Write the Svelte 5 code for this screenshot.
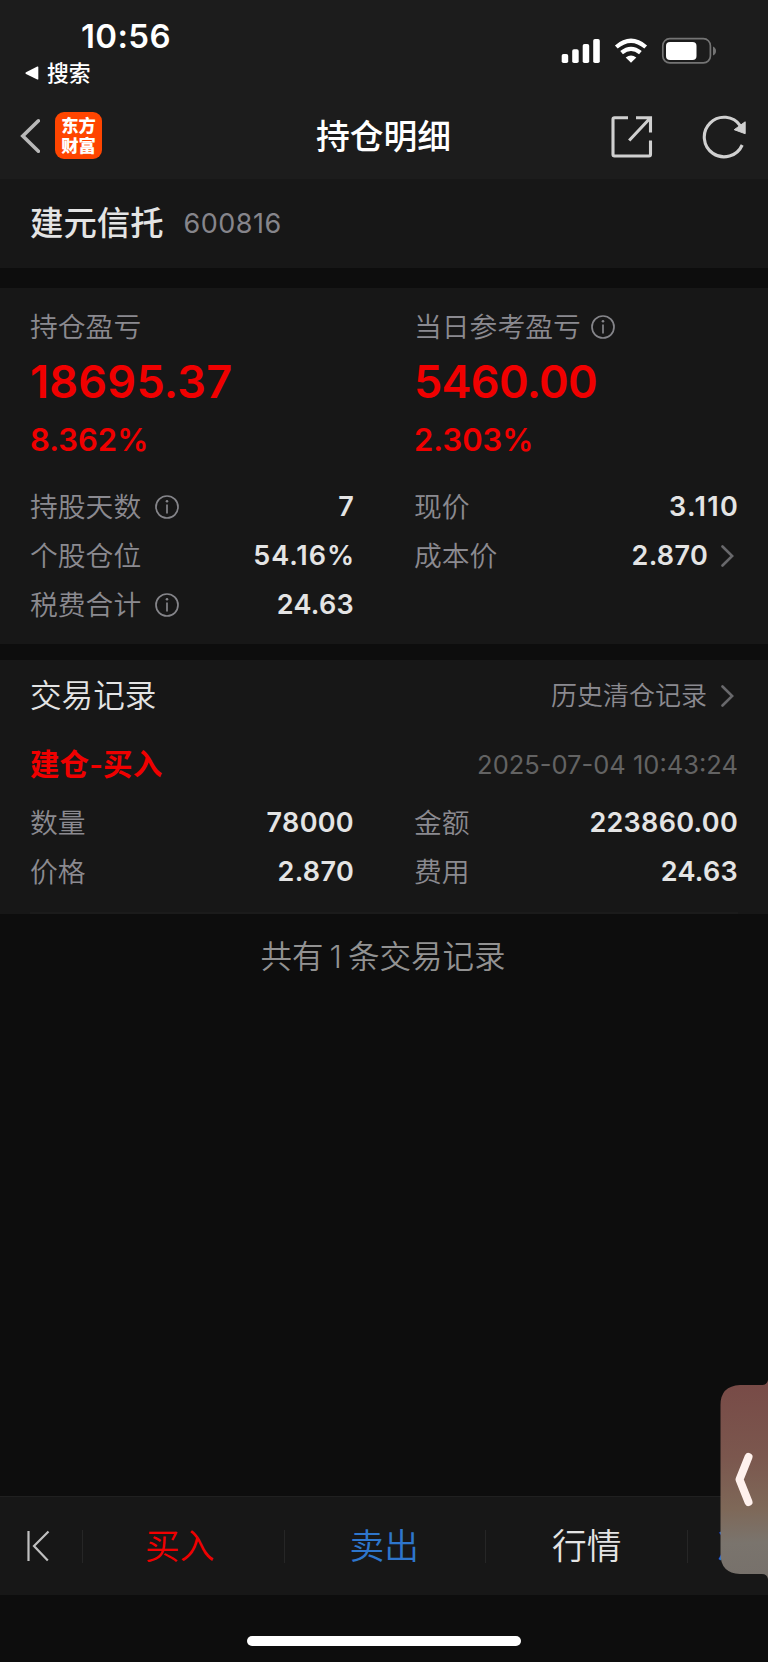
<script>
  const position = [
    { label: '持股天数', info: true, value: '7' },
    { label: '现价', value: '3.110', fit: 'loose' },
    { label: '个股仓位', value: '54.16%', fit: 'open' },
    { label: '成本价', value: '2.870', more: true },
    { label: '税费合计', info: true, value: '24.63' }
  ];
  const trade = [
    { label: '数量', value: '78000' },
    { label: '金额', value: '223860.00' },
    { label: '价格', value: '2.870' },
    { label: '费用', value: '24.63' }
  ];
</script>

{#snippet infoIcon()}
  <svg class="info" viewBox="0 0 24 24" width="24" height="24">
    <circle cx="12" cy="12" r="11" />
    <path d="M12 9.6V18.6" />
    <circle class="dot" cx="12" cy="6.3" r="1.3" />
  </svg>
{/snippet}

{#snippet chevron()}
  <svg class="chev" viewBox="0 0 13 22" width="13" height="22"><path d="M1.5 1.5L11.2 11L1.5 20.5" /></svg>
{/snippet}

{#snippet cell(item)}
  <div class="cell">
    <span class="label">{item.label}</span>
    {#if item.info}{@render infoIcon()}{/if}
    <span class={['value', item.fit]}>{item.value}</span>
    {#if item.more}{@render chevron()}{/if}
  </div>
{/snippet}

<div class="screen">
  <header>
    <div class="status">
      <div class="left">
        <div class="time">10:56</div>
        <div class="return">
          <svg viewBox="0 0 14 14" width="14" height="14"><path d="M13.3 1V13Q13.3 13.8 12.3 13.4L1 8Q-.2 7 1 6.2L12.3.6Q13.3.2 13.3 1Z" fill="#fff" /></svg>
          <span>搜索</span>
        </div>
      </div>
      <svg class="indicators" viewBox="0 0 156 28" width="156" height="28">
        <g fill="#fff">
          <rect x="1.7" y="17" width="6.5" height="9" rx="1.8" />
          <rect x="12.2" y="12.2" width="6.5" height="13.8" rx="1.8" />
          <rect x="22.7" y="7" width="6.5" height="19" rx="1.8" />
          <rect x="33.2" y="2" width="6.6" height="24" rx="1.8" />
          <path d="M71 25.8L65.7 20.6Q71 16.4 76.3 20.6Z" />
        </g>
        <g fill="none" stroke="#fff" stroke-width="4.2">
          <path d="M56.3 10Q71 -2.4 85.7 10" />
          <path d="M61.6 15.7Q71 7.9 80.4 15.7" />
        </g>
        <rect x="102.8" y="1.7" width="47.6" height="24.2" rx="7" fill="none" stroke="#747474" stroke-width="1.7" />
        <rect x="106" y="5" width="30.5" height="18" rx="4" fill="#fff" />
        <path d="M153 9.5Q156 11 156 14T153 18.5Z" fill="#747474" />
      </svg>
    </div>
    <nav>
      <svg class="back" viewBox="0 0 20 36" width="20" height="36"><path d="M18.4 2.8L2.8 18L18.4 33.2" /></svg>
      <div class="logo"><span>东方</span><span>财富</span></div>
      <h1>持仓明细</h1>
      <svg class="tool" viewBox="0 0 44 44" width="44" height="44">
        <path d="M19 2.8H5.5Q4 2.8 4 4.3V39.5Q4 41 5.5 41H40Q41.5 41 41.5 39.5V25.5" />
        <path d="M27 2.8H41.5V17.5M41.5 2.8L20.2 25.5" />
      </svg>
      <svg class="tool refresh" viewBox="0 0 46 44" width="46" height="44">
        <path d="M41.2 30A19.8 19.8 0 1 1 39.4 10.8" />
        <path class="tip" d="M33.2 14.7L44.2 6.8V18.7Z" />
      </svg>
    </nav>
  </header>

  <section class="stock">
    <strong>建元信托</strong>
    <span>600816</span>
  </section>

  <section class="holding">
    <div class="summary">
      <div>
        <div class="caption"><span>持仓盈亏</span></div>
        <div class="amount total">18695.37</div>
        <div class="percent">8.362%</div>
      </div>
      <div>
        <div class="caption"><span>当日参考盈亏</span> {@render infoIcon()}</div>
        <div class="amount today">5460.00</div>
        <div class="percent">2.303%</div>
      </div>
    </div>
    <div class="grid">
      {#each position as item}{@render cell(item)}{/each}
    </div>
  </section>

  <section class="trades">
    <div class="head">
      <h2>交易记录</h2>
      <div class="history"><span>历史清仓记录</span>{@render chevron()}</div>
    </div>
    <div class="deal">
      <b>建仓-买入</b>
      <time>2025-07-04 10:43:24</time>
    </div>
    <div class="grid">
      {#each trade as item}{@render cell(item)}{/each}
    </div>
    <div class="rule"></div>
  </section>

  <main>共有<i>1</i>条交易记录</main>

  <footer>
    <div class="first">
      <svg viewBox="0 0 24 32" width="24" height="32"><path d="M2.5 1V31M22.5 1.5L8 16L21.8 30.5" /></svg>
    </div>
    <div class="tab buy">买入</div>
    <div class="tab sell">卖出</div>
    <div class="tab quote">行情</div>
    <div class="rest">决</div>
  </footer>
  <div class="home"><span></span></div>

  <svg class="drawer" viewBox="0 0 48 200" width="48" height="200">
    <defs>
      <linearGradient id="drawer-fill" gradientUnits="userSpaceOnUse" x1="22" y1="5" x2="28" y2="195">
        <stop offset="0" stop-color="#784b47" />
        <stop offset="0.38" stop-color="#7b574e" />
        <stop offset="0.65" stop-color="#7e6858" />
        <stop offset="0.83" stop-color="#7a746d" />
        <stop offset="1" stop-color="#77716b" />
      </linearGradient>
    </defs>
    <path d="M48 0Q47 5 42 5H20Q.5 6 .5 25V174Q.5 193 20 194H42Q47 194 48 199Z" fill="url(#drawer-fill)" />
    <path d="M28.5 77L19.5 99.5L28.5 122" fill="none" stroke="#fff1ed" stroke-width="8" stroke-linecap="round" stroke-linejoin="round" />
  </svg>
</div>

<style>
  :global(body) { background: #fff; }
  .screen {
    position: relative;
    display: flex;
    flex-direction: column;
    width: 768px;
    height: 1662px;
    overflow: hidden;
    background: #0d0d0d;
    color: #e4e4e4;
    font-family: Inter, "Noto Sans CJK SC", sans-serif;
    white-space: nowrap;
  }
  header { height: 179px; background: #1c1c1c; flex: none; }
  .status { display: flex; justify-content: space-between; height: 93px; padding: 16px 52px 0 25px; color: #fff; box-sizing: border-box; }
  .time { padding-left: 56px; font-size: 33px; line-height: 40px; font-weight: 600; letter-spacing: .35px; }
  .return { display: flex; align-items: center; gap: 8px; height: 34px; font-size: 21.8px; font-weight: 450; }
  .return span { padding-bottom: 3px; }
  .indicators { margin-top: 21px; }
  nav { display: flex; align-items: center; height: 86px; padding: 0 21px 0 20px; }
  .back { fill: none; stroke: #b8b8b8; stroke-width: 3.6; stroke-linecap: round; }
  .logo { display: flex; flex-direction: column; justify-content: center; width: 47px; height: 47px; margin: 0 0 1px 15px; box-sizing: border-box; border-radius: 9px; background: #ff4500; color: #fff; font-size: 17.3px; line-height: 19.5px; font-weight: 800; text-align: center; }
  h1 { flex: 1; margin: 0; padding: 1px 0 0 56px; text-align: center; font-size: 33.8px; line-height: 50px; font-weight: 500; color: #fff; }
  .tool { margin-top: 2px; fill: none; stroke: #d0d0d0; stroke-width: 3.1; }
  .refresh { margin-left: 48px; }
  .tip { fill: #d0d0d0; stroke: #d0d0d0; stroke-width: 1; }
  section { background: #171717; flex: none; box-sizing: border-box; padding: 0 30px; }
  .stock { display: flex; align-items: center; height: 89px; }
  .stock strong { padding-bottom: 7px; font-size: 33.4px; font-weight: 500; }
  .stock span { margin-left: 20px; font-size: 27px; letter-spacing: .5px; color: #86858b; }
  .holding { height: 356px; margin-top: 20px; padding-top: 20px; }
  .summary { display: grid; grid-template-columns: 384px 1fr; height: 174px; }
  .caption { display: flex; align-items: center; gap: 10px; height: 38px; margin-bottom: 2px; font-size: 27.8px; font-weight: 350; color: #8b8a90; }
  .caption span, .label, .history span { padding-bottom: 4px; }
  .amount { height: 68px; line-height: 68px; font-size: 45px; font-weight: 600; color: #f00000; }
  .total { letter-spacing: .25px; }
  .today { letter-spacing: -.7px; }
  .percent { height: 48px; line-height: 48px; font-size: 31px; font-weight: 600; color: #f00000; }
  .grid { display: grid; grid-template-columns: 324px 324px; column-gap: 60px; grid-auto-rows: 49px; }
  .cell { display: flex; align-items: center; }
  .label { font-size: 27.8px; font-weight: 350; color: #8b8a90; }
  .info { fill: none; stroke: #85858a; stroke-width: 1.7; flex: none; }
  .label + .info { margin-left: 14px; }
  .dot { fill: #85858a; stroke: none; }
  .value { margin-left: auto; font-size: 27px; line-height: 33px; font-weight: 600; letter-spacing: .3px; }
  .loose { margin-right: -1px; letter-spacing: 1.3px; }
  .open { margin-right: -1px; letter-spacing: .95px; }
  .chev { fill: none; stroke: #68686b; stroke-width: 2.6; stroke-linecap: round; flex: none; margin: 0 4px 0 13px; }
  .trades { height: 254px; margin-top: 16px; }
  .head { display: flex; align-items: center; justify-content: space-between; height: 71px; margin-bottom: 1px; }
  h2 { margin: 0; padding-bottom: 5px; font-size: 31.6px; font-weight: 350; }
  .history { display: flex; align-items: center; font-size: 26px; font-weight: 350; color: #8b8a90; }
  .history span { margin-right: 1px; }
  .deal { display: flex; align-items: center; justify-content: space-between; height: 66px; }
  .deal b { padding-bottom: 6px; font-size: 29.5px; font-weight: 600; letter-spacing: .1px; color: #f00000; }
  time { padding-bottom: 2px; font-size: 25.5px; color: #636363; }
  .rule { height: 2px; margin-top: 16px; background: #1b1b1b; }
  main { flex: 1; padding: 18px 2px 0 0; text-align: center; font-size: 31.5px; line-height: 50px; font-weight: 350; color: #929292; }
  main i { font-style: normal; padding: 0 6px; }
  footer { display: flex; align-items: center; height: 99px; flex: none; box-sizing: border-box; border-top: 1px solid #202020; background: #171717; }
  .first { display: flex; align-items: center; flex: none; width: 82px; padding-left: 26px; box-sizing: border-box; }
  .first svg { fill: none; stroke: #c0c0c0; stroke-width: 2.2; }
  .tab { display: flex; align-items: center; justify-content: center; flex: none; width: 201.5px; height: 33px; padding-bottom: 4px; box-sizing: border-box; background: linear-gradient(#262626, #262626) left / 1px 100% no-repeat; font-size: 34.7px; font-weight: 350; }
  .buy { padding-right: 6px; color: #f00000; }
  .sell { color: #2e76cc; }
  .quote { padding-left: 2px; }
  .rest { display: flex; align-items: center; flex: 1; height: 33px; padding: 0 0 4px 31px; box-sizing: border-box; background: linear-gradient(#262626, #262626) left / 1px 100% no-repeat; font-size: 34px; font-weight: 350; color: #2e76cc; }
  .home { display: flex; justify-content: center; height: 67px; flex: none; padding-top: 41px; box-sizing: border-box; }
  .home span { width: 274px; height: 10px; border-radius: 5px; background: #fff; }
  .drawer { position: absolute; right: 0; top: 1380px; }
</style>
